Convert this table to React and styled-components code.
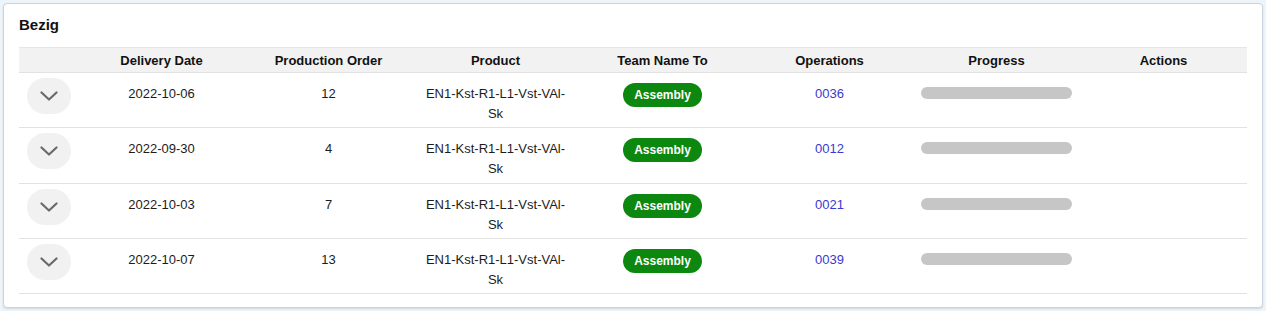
import styled, { createGlobalStyle } from "styled-components";

const Global = createGlobalStyle`
body{
margin:0;
background:#edf4fa;
font-family:"Liberation Sans", Arial, sans-serif;
color:#1c1c1c;
}
`
const Card = styled.section`
margin:3px;
background:#fff;
border:1px solid #c8d5e0;
border-radius:4px;
box-shadow:0 1px 2px rgba(0,0,0,0.12);
padding:12px 15px 13px 15px;
`
const Title = styled.h2`
margin:0 0 13px 0;
font-size:15px;
line-height:18px;
font-weight:700;
color:#111;
`
const Table = styled.table`
width:100%;
border-collapse:collapse;
table-layout:fixed;
font-size:13px;
`
const Head = styled.th`
background:#f2f2f2;
border-top:1px solid #e6e6e6;
border-bottom:1px solid #e2e2e2;
height:24px;
padding:0 8px;
font-weight:700;
text-align:center;
color:#111;
`
const Row = styled.tr`
border-bottom:1px solid #e2e2e2;
`
const Cell = styled.td`
vertical-align:top;
text-align:${p => p.$left ? "left" : "center"};
padding:${p => p.$pt ?? 11}px 8px 3px;
line-height:20px;
height:${p => 51.25 - (p.$pt ?? 11)}px;
box-sizing:content-box;
`
const Toggle = styled.button`
display:flex;
align-items:center;
justify-content:center;
width:44px;
height:36px;
border:none;
border-radius:18px;
background:#f1f1f1;
padding:0;
`
const Product = styled.span`
display:inline-block;
max-width:148px;
`
const Badge = styled.span`
display:inline-block;
background:#0c870f;
color:#fff;
font-weight:700;
font-size:12px;
line-height:24px;
padding:0 11px;
border-radius:12px;
`
const Link = styled.a`
color:#3b39d0;
text-decoration:none;
`
const Bar = styled.div`
width:151px;
height:12px;
border-radius:6px;
background:#c6c6c6;
margin-top:3px;
`

const rows = [
  { date: "2022-10-06", order: 12, ops: "0036" },
  { date: "2022-09-30", order: 4, ops: "0012" },
  { date: "2022-10-03", order: 7, ops: "0021" },
  { date: "2022-10-07", order: 13, ops: "0039" },
]

function Chevron() {
  return (
    <svg width="18" height="10" viewBox="0 0 18 10">
      <polyline points="1.5,1.5 9,8.5 16.5,1.5" fill="none" stroke="#6a6a6a" strokeWidth="2.2" strokeLinecap="round" strokeLinejoin="round" />
    </svg>
  )
}

export default function App() {
  return (
    <>
      <Global />
      <Card>
        <Title>Bezig</Title>
        <Table>
          <colgroup>
            <col style={{ width: 59 }} />
            <col /><col /><col /><col /><col /><col /><col />
          </colgroup>
          <thead>
            <tr>
              <Head></Head>
              <Head>Delivery Date</Head>
              <Head>Production Order</Head>
              <Head>Product</Head>
              <Head>Team Name To</Head>
              <Head>Operations</Head>
              <Head>Progress</Head>
              <Head>Actions</Head>
            </tr>
          </thead>
          <tbody>
            {rows.map(r => (
              <Row key={r.date}>
                <Cell $left $pt={5}><Toggle><Chevron /></Toggle></Cell>
                <Cell>{r.date}</Cell>
                <Cell>{r.order}</Cell>
                <Cell><Product>EN1-Kst-R1-L1-Vst-VAl-Sk</Product></Cell>
                <Cell $pt={10}><Badge>Assembly</Badge></Cell>
                <Cell><Link href="#">{r.ops}</Link></Cell>
                <Cell $left><Bar /></Cell>
                <Cell></Cell>
              </Row>
            ))}
          </tbody>
        </Table>
      </Card>
    </>
  )
}
